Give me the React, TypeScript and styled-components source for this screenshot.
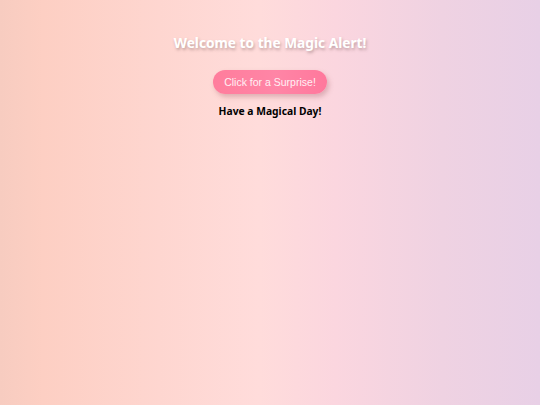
import { useState } from 'react'
import styled, { createGlobalStyle } from 'styled-components'

const GlobalStyle = createGlobalStyle`
  html, body {
    margin: 0;
    padding: 0;
    height: 100%;
  }

  #root {
    min-height: 100%;
  }
`

export default function App() {
  const [clicks, setClicks] = useState(0)

  return (
    <>
      <GlobalStyle />
      <Page>
        <Title>Welcome to the Magic Alert!</Title>
        <SurpriseButton onClick={() => setClicks(clicks + 1)}>
          Click for a Surprise!
        </SurpriseButton>
        <Message>Have a Magical Day!</Message>
      </Page>
    </>
  )
}

const Page = styled.div`
  min-height: 405px;
  box-sizing: border-box;
  display: flex;
  flex-direction: column;
  align-items: center;
  padding-top: 33px;
  font-family: "Comic Sans MS", "Noto Sans", sans-serif;
  background: linear-gradient(
    to right,
    #f7ccc0 0%,
    #fdcfc3 8%,
    #ffdcdb 48%,
    #fbd6df 62%,
    #efd2e2 82%,
    #e8d0e6 100%
  );
`

const Title = styled.h1`
  margin: 0;
  font-size: 13.7px;
  line-height: 20px;
  font-weight: 700;
  color: #ffffff;
  text-shadow: 1px 2px 3px rgba(120, 90, 90, 0.45);
`

const SurpriseButton = styled.button`
  margin-top: 17px;
  width: 114px;
  height: 24px;
  padding: 0;
  border: none;
  border-radius: 12px;
  background: linear-gradient(to right, #ff7d9c, #ff85a6 55%, #ff789c);
  color: #fff0f4;
  font-family: "Liberation Sans", Arial, sans-serif;
  font-size: 10.5px;
  cursor: pointer;
  box-shadow: 2px 3px 5px rgba(160, 90, 100, 0.35);
  transition: transform 200ms ease;

  :hover {
    transform: scale(1.05);
  }
`

const Message = styled.p`
  margin: 9px 0 0;
  font-size: 10.3px;
  line-height: 16px;
  font-weight: 700;
  color: #000000;
`
